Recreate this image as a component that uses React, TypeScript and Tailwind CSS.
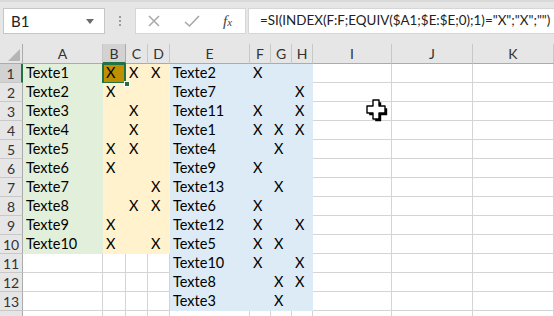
import React from "react";

const COLS = ["A", "B", "C", "D", "E", "F", "G", "H", "I", "J", "K"];

type Row = string[];
const DATA: Row[] = [
  ["Texte1", "X", "X", "X", "Texte2", "X", "", ""],
  ["Texte2", "X", "", "", "Texte7", "", "", "X"],
  ["Texte3", "", "X", "", "Texte11", "X", "", "X"],
  ["Texte4", "", "X", "", "Texte1", "X", "X", "X"],
  ["Texte5", "X", "X", "", "Texte4", "", "X", ""],
  ["Texte6", "X", "", "", "Texte9", "X", "", ""],
  ["Texte7", "", "", "X", "Texte13", "", "X", ""],
  ["Texte8", "", "X", "X", "Texte6", "X", "", ""],
  ["Texte9", "X", "", "", "Texte12", "X", "", "X"],
  ["Texte10", "X", "", "X", "Texte5", "X", "X", ""],
  ["", "", "", "", "Texte10", "X", "", "X"],
  ["", "", "", "", "Texte8", "", "X", "X"],
  ["", "", "", "", "Texte3", "", "X", ""],
  ["", "", "", "", "", "", "", ""],
];

const font = { fontFamily: "Lato, 'Liberation Sans', sans-serif" };

function cellClass(r: number, c: number): string {
  if (c === 0 && r < 10) return "bg-[#e2efda]";
  if (c >= 1 && c <= 3 && r < 10) return "bg-[#fff2cc]";
  if (c >= 4 && c <= 7 && r < 13) return "bg-[#ddebf7]";
  return "bg-white border-r border-b border-[#d4d4d4]";
}

export default function App() {
  return (
    <div
      className="w-[554px] h-[316px] overflow-hidden bg-[#e6e6e6] relative select-none"
      style={font}
    >
      {/* Formula bar */}
      <div className="h-[44px] flex items-start pt-[6px] border-t-[2px] border-[#dadada] pl-[3px]">
        <div className="w-[102px] h-[26px] bg-white border border-[#c6c6c6] flex items-center justify-between pl-[7px] pr-[10px]">
          <span className="text-[15px] text-[#222] leading-none">B1</span>
          <svg width="8" height="5" viewBox="0 0 8 5">
            <path d="M0 0 L8 0 L4 5 Z" fill="#6b6b6b" />
          </svg>
        </div>
        <div className="w-[30px] h-[26px] flex flex-col items-center justify-center gap-[2px]">
          <div className="w-[2px] h-[2px] bg-[#9a9a9a]" />
          <div className="w-[2px] h-[2px] bg-[#9a9a9a]" />
          <div className="w-[2px] h-[2px] bg-[#9a9a9a]" />
        </div>
        <div className="w-[111px] h-[26px] bg-white border border-[#d6d6d6] flex items-center pl-[11px] gap-[23px]">
          <svg width="14" height="14" viewBox="0 0 14 14">
            <path d="M2 2 L12 12 M12 2 L2 12" stroke="#a8a8a8" strokeWidth="1.5" />
          </svg>
          <svg width="16" height="14" viewBox="0 0 16 14">
            <path d="M1 8 L5.5 12 L15 2" stroke="#a8a8a8" strokeWidth="1.6" fill="none" />
          </svg>
          <span
            className="text-[15px] italic text-[#444] leading-none"
            style={{ fontFamily: "'Liberation Serif', serif" }}
          >
            f<span className="text-[11px]">x</span>
          </span>
        </div>
        <div className="ml-[2px] flex-1 h-[26px] bg-white border-y border-l border-[#d6d6d6] flex items-center pl-[11px] overflow-hidden">
          <span className="text-[13.4px] text-[#222] whitespace-nowrap leading-none">
            =SI(INDEX(F:F;EQUIV($A1;$E:$E;0);1)="X";"X";"")
          </span>
        </div>
      </div>

      {/* Grid */}
      <div className="grid grid-cols-[23px_80px_23px_22px_22px_80px_21px_21px_21px_79px_81px_1fr] bg-white">
        <div className="h-[20px] bg-[#e6e6e6] border-r border-b border-[#ababab] relative">
          <svg className="absolute right-[2px] bottom-[2px]" width="12" height="12" viewBox="0 0 12 12">
            <path d="M12 0 L12 12 L0 12 Z" fill="#b5b5b5" />
          </svg>
        </div>
        {COLS.map((c) => (
          <div
            key={c}
            className={
              "h-[20px] flex items-center justify-center text-[14px] text-[#333] border-r border-b " +
              (c === "B"
                ? "bg-[#d2d2d2] border-r-[#ababab] border-b-[#217346] border-b-2"
                : "bg-[#e6e6e6] border-r-[#c8c8c8] border-b-[#ababab]")
            }
          >
            {c}
          </div>
        ))}

        {DATA.map((row, r) => (
          <React.Fragment key={r}>
            <div
              className={
                "h-[19px] flex items-center justify-center text-[14px] text-[#333] border-b border-b-[#c8c8c8] " +
                (r === 0
                  ? "bg-[#d2d2d2] border-r-2 border-r-[#217346]"
                  : "bg-[#e6e6e6] border-r border-r-[#ababab]")
              }
            >
              {r < 13 ? r + 1 : ""}
            </div>
            {COLS.map((_, c) => {
              const v = c < 8 ? row[c] : "";
              const selected = r === 0 && c === 1;
              return (
                <div
                  key={c}
                  className={
                    "h-[19px] flex items-center pl-[3px] text-[14.5px] text-black leading-none whitespace-nowrap relative " +
                    (selected ? "bg-[#bf8f00]" : cellClass(r, c))
                  }
                >
                  {v}
                  {selected && (
                    <>
                      <div className="absolute -left-[1px] -top-[1px] w-[24px] h-[21px] border-2 border-[#217346] pointer-events-none" />
                      <div className="absolute -right-[4px] -bottom-[4px] w-[6px] h-[6px] bg-[#217346] border border-white z-10" />
                    </>
                  )}
                </div>
              );
            })}
          </React.Fragment>
        ))}
      </div>

      {/* cursor */}
      <svg
        className="absolute left-[365px] top-[99px]"
        width="24"
        height="24"
        viewBox="0 0 24 24"
      >
        <path
          d="M9 2 H15 V8 H21 V15 H15 V21 H9 V15 H3 V8 H9 Z"
          fill="#000"
          transform="translate(1.2 1.2)"
        />
        <path
          d="M8 1 H14 V7 H20 V14 H14 V20 H8 V14 H2 V7 H8 Z"
          fill="#fff"
          stroke="#000"
          strokeWidth="1.4"
          strokeLinejoin="round"
        />
      </svg>
    </div>
  );
}
